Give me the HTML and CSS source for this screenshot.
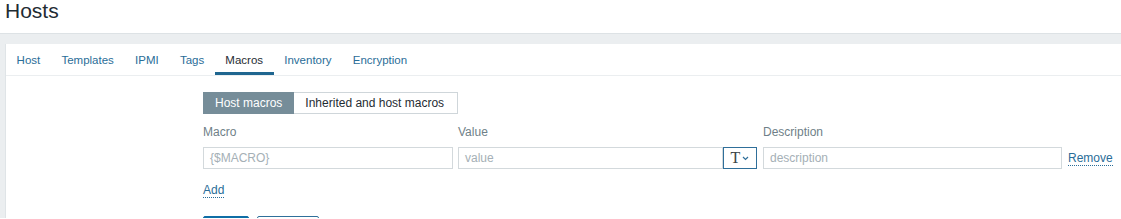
FILE: index.html
```html
<!DOCTYPE html>
<html>
<head>
<meta charset="utf-8">
<link rel="stylesheet" href="styles.css">
</head>
<body>
<h1 class="page-title">Hosts</h1>
<div class="frame">
  <div class="panel">
    <ul class="tabs">
      <li><a class="tab">Host</a></li>
      <li><a class="tab">Templates</a></li>
      <li><a class="tab">IPMI</a></li>
      <li><a class="tab">Tags</a></li>
      <li><a class="tab active">Macros</a></li>
      <li><a class="tab">Inventory</a></li>
      <li><a class="tab">Encryption</a></li>
    </ul>
    <div class="form">
      <div class="radio">
        <span class="seg seg-on">Host macros</span>
        <span class="seg">Inherited and host macros</span>
      </div>
      <div class="macro-grid">
        <div class="lbl">Macro</div>
        <div class="lbl">Value</div>
        <div class="lbl">Description</div>
        <div></div>
        <div class="input">{$MACRO}</div>
        <div class="value-wrap">
          <div class="input value-input">value</div>
          <div class="type-btn"><span class="t-glyph">T</span><svg class="chev" width="7" height="5" viewBox="0 0 7 5"><path d="M1 1 L3.5 3.5 L6 1" fill="none" stroke="#2f6f9a" stroke-width="1.2"/></svg></div>
        </div>
        <div class="input">description</div>
        <a class="link remove">Remove</a>
      </div>
      <a class="link add">Add</a>
      <div class="buttons">
        <span class="btn btn-primary"></span>
        <span class="btn btn-alt"></span>
      </div>
    </div>
  </div>
</div>
</body>
</html>
```
FILE: styles.css
```css
html, body {
  margin: 0;
  background: #ffffff;
  font-family: "Liberation Sans", Arial, sans-serif;
  overflow: hidden;
}
.page-title {
  margin: 0;
  height: 33px;
  padding-left: 5px;
  font-size: 21px;
  font-weight: normal;
  line-height: 22px;
  color: #1f2c33;
}
.frame {
  background: #ebeef0;
  border-top: 1px solid #dde2e5;
  padding: 10px 0 0 5px;
  height: 185px;
  box-sizing: border-box;
}
.panel {
  background: #ffffff;
  border-left: 1px solid #dfe4e7;
  height: 100%;
  overflow: hidden;
}
.tabs {
  list-style: none;
  margin: 0;
  padding: 0;
  display: flex;
  border-bottom: 1px solid #ebeef0;
}
.tab {
  display: block;
  padding: 0 10.6px;
  height: 28px;
  line-height: 33px;
  font-size: 11.5px;
  color: #2a6d98;
  border-bottom: 3px solid transparent;
}
.tab.active {
  color: #1f2c33;
  border-bottom-color: #1f6690;
}
.form {
  padding: 16px 0 0 197px;
}
.radio {
  display: inline-flex;
  height: 22px;
  border: 1px solid #cfd6da;
  box-sizing: border-box;
}
.seg {
  padding: 0 12px;
  font-size: 12px;
  line-height: 20px;
  color: #1f2c33;
  background: #fff;
}
.seg + .seg {
  padding: 0 13px 0 11px;
}
.seg-on {
  background: #768d99;
  color: #ffffff;
  margin: -1px 0 -1px -1px;
  line-height: 22px;
  padding: 0 12px 0 12px;
}
.macro-grid {
  display: grid;
  grid-template-columns: 250px 299px 300px auto;
  column-gap: 5px;
  row-gap: 8px;
  margin-top: 11px;
  align-items: center;
}
.macro-grid > :nth-child(3),
.macro-grid > :nth-child(7) {
  margin-left: 1px;
}
.lbl {
  font-size: 12px;
  line-height: 14px;
  color: #6f7f88;
}
.input {
  height: 22px;
  box-sizing: border-box;
  border: 1px solid #d3d9dc;
  padding: 0 6px;
  font-size: 12px;
  line-height: 20px;
  color: #a5b0b6;
}
.value-wrap {
  display: flex;
}
.value-input {
  flex: 1;
}
.type-btn {
  width: 34px;
  height: 22px;
  box-sizing: border-box;
  border: 1px solid #2f6f9a;
  display: flex;
  align-items: center;
  justify-content: center;
  gap: 2px;
}
.t-glyph {
  font-family: "Liberation Serif", "Times New Roman", serif;
  font-size: 16px;
  line-height: 16px;
  color: #3b4448;
}
.link {
  display: inline-block;
  font-size: 12px;
  line-height: 14px;
  color: #2a6d98;
  border-bottom: 1px dotted #2a6d98;
}
.remove {
  justify-self: start;
  margin-left: 1px;
}
.add {
  margin-top: 14px;
}
.buttons {
  display: flex;
  gap: 8px;
  margin-top: 18px;
}
.btn {
  display: block;
  height: 22px;
  box-sizing: border-box;
  border-radius: 2px;
}
.btn-primary {
  width: 46px;
  background: #0f6ea6;
  border: 1px solid #0f6ea6;
}
.btn-alt {
  width: 62px;
  background: #fff;
  border: 1px solid #2f6f9a;
}
```
